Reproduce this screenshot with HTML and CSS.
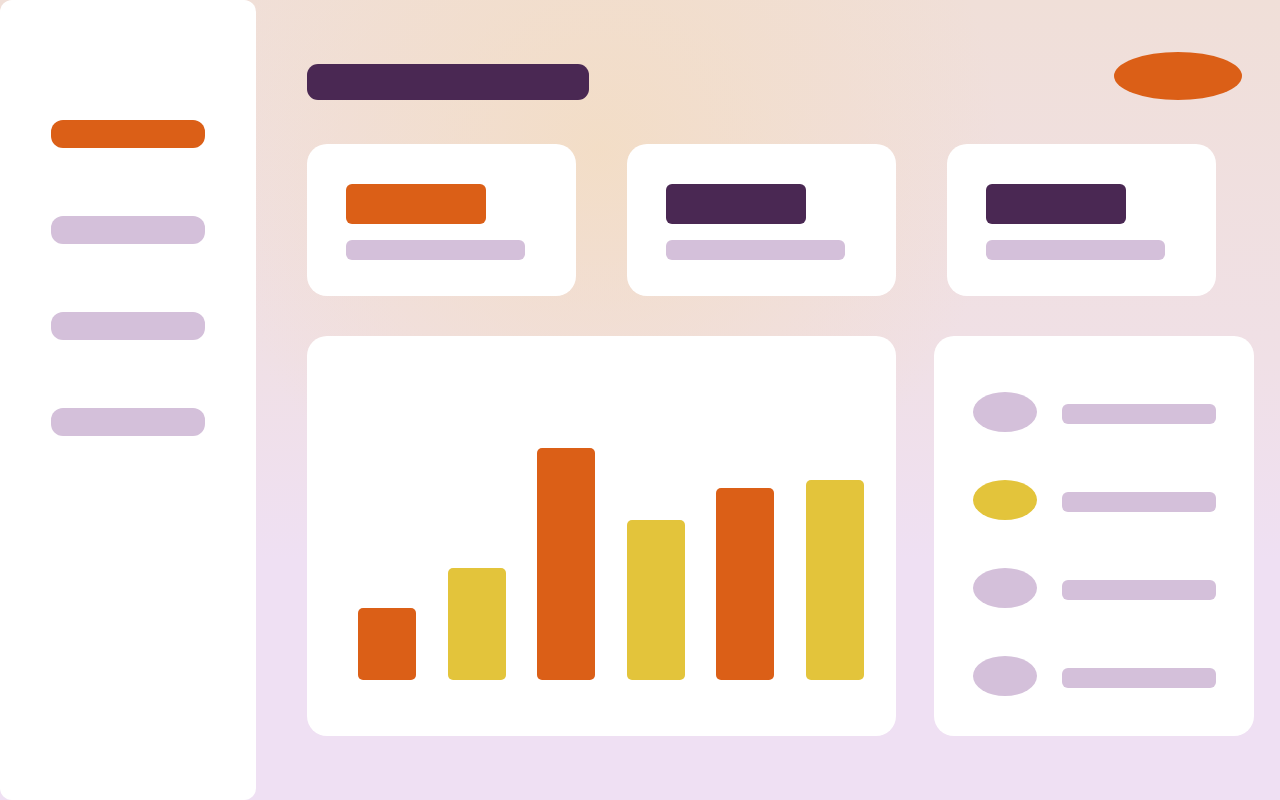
FILE: index.html
```html
<!DOCTYPE html>
<html lang="en">
<head>
<meta charset="utf-8">
<title>Dashboard</title>
<link rel="stylesheet" href="styles.css">
</head>
<body>
<div class="app">
  <aside class="sidebar">
    <div class="nav-item active"></div>
    <div class="nav-item"></div>
    <div class="nav-item"></div>
    <div class="nav-item"></div>
  </aside>
  <main class="main">
    <header class="header">
      <div class="title"></div>
      <div class="avatar"></div>
    </header>
    <section class="stats">
      <div class="stat-card">
        <div class="stat-value orange"></div>
        <div class="stat-label"></div>
      </div>
      <div class="stat-card">
        <div class="stat-value purple"></div>
        <div class="stat-label"></div>
      </div>
      <div class="stat-card">
        <div class="stat-value purple"></div>
        <div class="stat-label"></div>
      </div>
    </section>
    <section class="bottom">
      <div class="chart-card">
        <div class="bar orange" style="height:72px"></div>
        <div class="bar yellow" style="height:112px"></div>
        <div class="bar orange" style="height:232px"></div>
        <div class="bar yellow" style="height:160px"></div>
        <div class="bar orange" style="height:192px"></div>
        <div class="bar yellow" style="height:200px"></div>
      </div>
      <div class="list-card">
        <div class="list-row"><div class="dot"></div><div class="line"></div></div>
        <div class="list-row"><div class="dot yellow"></div><div class="line"></div></div>
        <div class="list-row"><div class="dot"></div><div class="line"></div></div>
        <div class="list-row"><div class="dot"></div><div class="line"></div></div>
      </div>
    </section>
  </main>
</div>
</body>
</html>
```

FILE: styles.css
```css
html, body {
  margin: 0;
  padding: 0;
  width: 1280px;
  height: 800px;
  overflow: hidden;
  font-family: "Liberation Sans", Arial, sans-serif;
}

body {
  background:
    radial-gradient(circle at 600px 150px, rgba(243, 221, 196, 0.9) 0px, rgba(243, 221, 196, 0) 400px),
    linear-gradient(180deg, #f0dfd8 0%, #f0e0e6 45%, #efe0f3 70%, #efe0f3 100%);
}

.app {
  display: flex;
  width: 1280px;
  height: 800px;
}

.sidebar {
  width: 256px;
  height: 800px;
  flex: none;
  background: #ffffff;
  border-radius: 12px;
  box-sizing: border-box;
  padding: 120px 0 0 51px;
  display: flex;
  flex-direction: column;
  gap: 68px;
}

.nav-item {
  width: 154px;
  height: 28px;
  border-radius: 12px;
  background: #d4c0da;
}

.nav-item.active {
  background: #db5f17;
}

.main {
  flex: 1;
  box-sizing: border-box;
  padding: 52px 0 0 51px;
  display: flex;
  flex-direction: column;
}

.header {
  width: 935px;
  display: flex;
  justify-content: space-between;
  align-items: flex-end;
}

.title {
  width: 282px;
  height: 36px;
  border-radius: 11px;
  background: #4a2853;
}

.avatar {
  width: 128px;
  height: 48px;
  border-radius: 50%;
  background: #db5f17;
}

.stats {
  margin-top: 44px;
  display: grid;
  grid-template-columns: 269px 269px 269px;
  column-gap: 51px;
}

.stat-card {
  height: 152px;
  box-sizing: border-box;
  background: #ffffff;
  border-radius: 20px;
  padding: 40px 0 0 39px;
}

.stat-value {
  width: 140px;
  height: 40px;
  border-radius: 6px;
}

.stat-label {
  margin-top: 16px;
  width: 179px;
  height: 20px;
  border-radius: 6px;
  background: #d4c0da;
}

.orange { background: #db5f17; }
.purple { background: #4a2853; }
.yellow { background: #e3c43b; }

.bottom {
  margin-top: 40px;
  display: grid;
  grid-template-columns: 589px 320px;
  column-gap: 38px;
}

.chart-card {
  height: 400px;
  box-sizing: border-box;
  background: #ffffff;
  border-radius: 20px;
  padding: 0 0 56px 51px;
  display: flex;
  align-items: flex-end;
  gap: 31.6px;
}

.bar {
  width: 58px;
  border-radius: 5px;
  flex: none;
}

.list-card {
  height: 400px;
  box-sizing: border-box;
  background: #ffffff;
  border-radius: 20px;
  padding: 56px 0 0 39px;
  display: flex;
  flex-direction: column;
  gap: 48px;
}

.list-row {
  display: flex;
  align-items: flex-start;
  gap: 25px;
}

.dot {
  width: 64px;
  height: 40px;
  border-radius: 50%;
  background: #d4c0da;
  flex: none;
}

.dot.yellow {
  background: #e3c43b;
}

.line {
  margin-top: 12px;
  width: 154px;
  height: 20px;
  border-radius: 6px;
  background: #d4c0da;
}
```
